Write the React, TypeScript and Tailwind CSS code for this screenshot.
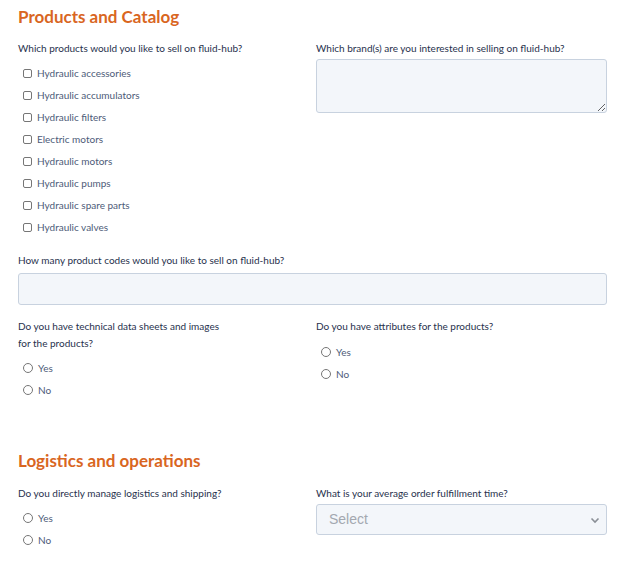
import React from "react";

const PRODUCTS = [
  "Hydraulic accessories",
  "Hydraulic accumulators",
  "Hydraulic filters",
  "Electric motors",
  "Hydraulic motors",
  "Hydraulic pumps",
  "Hydraulic spare parts",
  "Hydraulic valves",
];

function Check({ label }: { label: string }) {
  return (
    <label className="flex items-center gap-[5px] h-[22px] pl-[5px] text-[10px] text-[#4d5b78]">
      <span className="w-[9px] h-[9px] border border-[#767676] rounded-[2px] bg-white shrink-0" />
      <span>{label}</span>
    </label>
  );
}

function Radio({ label }: { label: string }) {
  return (
    <label className="flex items-center gap-[5px] h-[22px] pl-[5px] text-[10px] text-[#4d5b78]">
      <span className="w-[10px] h-[10px] border border-[#767676] rounded-full bg-white shrink-0" />
      <span>{label}</span>
    </label>
  );
}

function Label({ children }: { children: React.ReactNode }) {
  return <p className="text-[10px] leading-[17px] text-[#27314d]">{children}</p>;
}

function Heading({ children }: { children: React.ReactNode }) {
  return (
    <h2 className="text-[17px] leading-[24px] font-bold text-[#d9661f]">{children}</h2>
  );
}

export default function App() {
  return (
    <div
      className="w-[623px] h-[563px] bg-white pl-[18px] pr-[16px] pt-[5px] overflow-hidden"
      style={{ fontFamily: "Lato, 'Noto Sans', sans-serif" }}
    >
      <Heading>Products and Catalog</Heading>

      <div className="grid grid-cols-[298px_1fr] mt-[11px]">
        <div>
          <Label>Which products would you like to sell on fluid-hub?</Label>
          <div className="mt-[5px]">
            {PRODUCTS.map((p) => (
              <Check key={p} label={p} />
            ))}
          </div>
        </div>
        <div>
          <Label>Which brand(s) are you interested in selling on fluid-hub?</Label>
          <textarea className="mt-[2px] block w-full h-[54px] bg-[#f3f6fa] border border-[#c8d2df] rounded-[3px] resize-y" />
        </div>
      </div>

      <div className="mt-[14px]">
        <Label>How many product codes would you like to sell on fluid-hub?</Label>
        <input className="mt-[4px] block w-full h-[32px] bg-[#f3f6fa] border border-[#c8d2df] rounded-[3px]" />
      </div>

      <div className="grid grid-cols-[298px_1fr] mt-[13px]">
        <div>
          <Label>
            Do you have technical data sheets and images
            <br />
            for the products?
          </Label>
          <div className="mt-[5px]">
            <Radio label="Yes" />
            <Radio label="No" />
          </div>
        </div>
        <div>
          <Label>Do you have attributes for the products?</Label>
          <div className="mt-[6px]">
            <Radio label="Yes" />
            <Radio label="No" />
          </div>
        </div>
      </div>

      <div className="mt-[48px]">
        <Heading>Logistics and operations</Heading>
      </div>

      <div className="grid grid-cols-[298px_1fr] mt-[12px]">
        <div>
          <Label>Do you directly manage logistics and shipping?</Label>
          <div className="mt-[5px]">
            <Radio label="Yes" />
            <Radio label="No" />
          </div>
        </div>
        <div>
          <Label>What is your average order fulfillment time?</Label>
          <div className="mt-[2px] relative h-[31px] bg-[#f3f6fa] border border-[#c8d2df] rounded-[3px] flex items-center px-[12px]">
            <span
              className="text-[14px] text-[#a3a8b0]"
              style={{ fontFamily: "'Liberation Sans', Arial, sans-serif" }}
            >
              Select
            </span>
            <svg
              className="absolute right-[6px] top-1/2 -translate-y-1/2"
              width="10"
              height="10"
              viewBox="0 0 10 10"
              fill="none"
            >
              <path d="M1.5 3.5 L5 7 L8.5 3.5" stroke="#8a8f96" strokeWidth="1.6" />
            </svg>
          </div>
        </div>
      </div>
    </div>
  );
}
